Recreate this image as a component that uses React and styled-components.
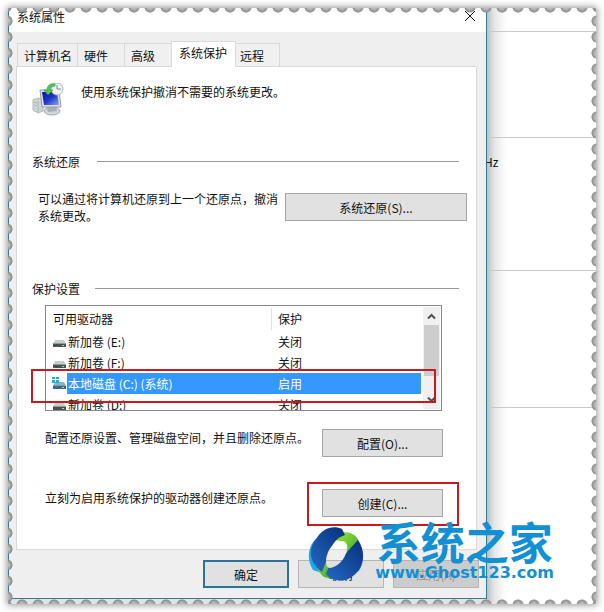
import React from "react";
import styled, { createGlobalStyle } from "styled-components";

const GlobalStyle = createGlobalStyle`
  * { box-sizing: border-box; }
  body {
    margin: 0;
    background: #fff;
    color: #111;
    font: 12px/17px "Noto Sans CJK SC", sans-serif;
  }
  button { font: inherit; color: inherit; padding: 0; }
  p, h1, h2 { margin: 0; font: inherit; }
`;

const Page = styled.div`
  padding: 8px;
`;

const Stamp = styled.div`
  position: relative;
  display: grid;
  grid-template-columns: minmax(0, 1fr) 109px;
  padding-bottom: 5px;
  box-shadow: 0 0 7px 1px rgba(0, 0, 0, 0.42);
  background: #e2e2e2;
`;

const Holes = styled.div`
  position: absolute;
  pointer-events: none;
  background-image: radial-gradient(circle, #bbb 0 2px, #a0a0a0 4px, #8d8d8d 5px, transparent 6px);
  ${({ $side }) =>
    $side === "top" || $side === "bottom"
      ? `left: 0; right: 0; ${$side}: 0; height: 5px; background-size: 16px 12px; background-position: 6px ${$side === "top" ? "-7px" : "0"};`
      : `top: 0; bottom: 0; ${$side}: 0; width: 5px; background-size: 12px 16px; background-position: ${$side === "left" ? "-7px" : "0"} 5px;`}
`;

const Dialog = styled.section`
  background: #efefef;
  border: solid #317d98;
  border-width: 0 1px 1px;
  padding-bottom: 10px;
`;

const TitleBar = styled.header`
  display: flex;
  justify-content: space-between;
  height: 24px;
  padding: 0 10px 0 8px;
  background: #fff;
`;

const CloseButton = styled.button`
  width: 12px;
  height: 16px;
  border: 0;
  background: none;
  display: flex;
  align-items: center;
`;

const Tabs = styled.div`
  display: flex;
  align-items: flex-end;
  height: 34px;
  padding-left: 8px;
`;

const Tab = styled.button`
  width: ${({ $width }) => $width}px;
  height: ${({ $active }) => ($active ? 26 : 23)}px;
  margin-bottom: ${({ $active }) => ($active ? -1 : 0)}px;
  position: relative;
  padding-left: ${({ $active }) => ($active ? 7 : 6)}px;
  padding-bottom: ${({ $active }) => ($active ? 4 : 0)}px;
  text-align: left;
  border: 1px solid #d9d9d9;
  border-right-width: ${({ $active }) => ($active ? 1 : 0)}px;
  border-bottom: 0;
  background: ${({ $active }) => ($active ? "#fff" : "#f0f0f0")};
  &:last-child { padding-left: 4px; border-left-width: 0; border-right-width: 1px; }
`;

const Panel = styled.div`
  margin: 0 9px 0 7px;
  padding: 16px 17px 0 15px;
  border: 1px solid #d9d9d9;
  background: #fff;
`;

const Intro = styled.div`
  display: flex;
  gap: 17px;
  height: 70px;
`;

const GroupTitle = styled.h2`
  display: flex;
  align-items: center;
  gap: ${({ $gap }) => $gap}px;
  &::after {
    content: "";
    flex: 1;
    height: 1px;
    background: #999;
  }
`;

const RestoreRow = styled.div`
  display: flex;
  align-items: center;
  justify-content: space-between;
  margin: 20px -8px 56px 6px;
  p { width: 242px; }
`;

const ActionButton = styled.button`
  width: ${({ $wide }) => ($wide ? 182 : 121)}px;
  height: 28px;
  flex-shrink: 0;
  border: 1px solid #a5a5a5;
  background: #e1e1e1;
`;

const DriveList = styled.div`
  position: relative;
  margin: 8px 17px 18px 13px;
`;

const DriveView = styled.div`
  display: flex;
  height: 106px;
  border: 1px solid #828790;
  overflow: hidden;
`;

const DriveTable = styled.table`
  flex: 1;
  table-layout: fixed;
  border-collapse: collapse;
  text-align: left;
  th { height: 25px; padding: 0 0 0 7px; font-weight: normal; }
  th + th { background: linear-gradient(#e2e2e2, #e2e2e2) 0 2px / 1px 22px no-repeat; }
  td { height: 21px; padding: 0; line-height: 21px; }
  td:first-child { padding-left: 6px; }
  td:nth-child(2) { padding-left: 1px; }
  td:last-child { padding-left: 7px; }
  svg { display: block; }
`;

const DriveRow = styled.tr`
  td + td {
    background: ${({ $selected }) => ($selected ? "#3399ff" : "transparent")};
    color: ${({ $selected }) => ($selected ? "#fff" : "inherit")};
  }
`;

const ScrollBar = styled.div`
  width: 17px;
  margin: 1px 1px 1px 2px;
  background: #f0f0f0;
  display: flex;
  flex-direction: column;
  align-items: center;
  padding: 6px 0;
`;

const Thumb = styled.div`
  width: 15px;
  height: 51px;
  margin: 5px 0 auto;
  background: #cdcdcd;
`;

const Highlight = styled.div`
  position: absolute;
  inset: ${({ $inset }) => $inset};
  border: 2px solid #c41c1e;
  pointer-events: none;
`;

const SettingRow = styled.div`
  display: flex;
  justify-content: space-between;
  margin: 0 16px 32px 13px;
`;

const ButtonAnchor = styled.div`
  position: relative;
  display: flex;
`;

const Footer = styled.footer`
  display: flex;
  justify-content: flex-end;
  gap: 9px;
  padding: 10px 7px 0;
`;

const FooterButton = styled.button`
  width: 86px;
  height: 28px;
  border: ${({ $primary }) => ($primary ? "2px solid #2c7398" : "1px solid #b5b5b5")};
  background: ${({ disabled }) => (disabled ? "#cccccc" : "#e1e1e1")};
  color: ${({ disabled }) => (disabled ? "#929292" : "#111")};
`;

const Backdrop = styled.aside`
  overflow: hidden;
  margin-bottom: -5px;
  background: linear-gradient(90deg, #bac1c3, #e3e5e6 7px, #fff 19px);
`;

const BackdropSection = styled.div`
  height: ${({ $height }) => $height}px;
  padding-top: 15px;
  border-bottom: 1px solid #c9c9c9;
  text-indent: -3px;
`;

const Watermark = styled.div`
  position: absolute;
  right: 42px;
  bottom: 21px;
  display: flex;
  align-items: flex-end;
  gap: 11px;
  color: #1290d2;
  pointer-events: none;
`;

const WatermarkText = styled.div`
  display: flex;
  flex-direction: column;
  align-items: center;
  strong { font: 700 44px/44px "Noto Sans CJK SC", sans-serif; }
  span { font: bold 16px/20px "DejaVu Sans", sans-serif; }
`;

const tabs = [
  ["计算机名", 60],
  ["硬件", 47],
  ["高级", 47],
  ["系统保护", 65],
  ["远程", 44],
];

const drives = [
  ["新加卷 (E:)", "关闭"],
  ["新加卷 (F:)", "关闭"],
  ["本地磁盘 (C:) (系统)", "启用"],
  ["新加卷 (D:)", "关闭"],
];

function DriveIcon({ system }) {
  return (
    <svg width="15" height="15" viewBox="0 0 15 15" aria-hidden="true">
      <path d="M3 6h9l2 4H1z" fill={system ? "#8bafc8" : "#c7cbcb"} />
      <path d="M1 9h13v4H1z" fill={system ? "#346c96" : "#4b5152"} />
      <path d="M1 9h13v1H1z" fill="#939a9c" />
      <path d="M10 11h2v1h-2z" fill="#8fe39a" />
      {system && <path d="M0 1h3v2H0zm4 0h3v2H4zM0 4h3v3H0zm4 0h3v3H4z" fill="#25a7cf" />}
    </svg>
  );
}

function Chevron({ down }) {
  return (
    <svg width="9" height="7" viewBox="0 0 9 7" aria-hidden="true">
      <path d={down ? "M1 1.5l3.5 3.5L8 1.5" : "M1 5.5L4.5 2 8 5.5"} fill="none" stroke="#505050" strokeWidth="2" />
    </svg>
  );
}

function ComputerIcon() {
  return (
    <svg width="32" height="33" viewBox="0 0 32 33" aria-hidden="true">
      <defs>
        <linearGradient id="screen" x1="0" y1="0" x2="1" y2="1">
          <stop stopColor="#0714a2" /><stop offset=".5" stopColor="#2036c8" /><stop offset="1" stopColor="#8ba8ef" />
        </linearGradient>
      </defs>
      <path d="M1 17l5-2 5 1v12l-5 2-5-3z" fill="#d1d4d6" stroke="#b2b7ba" />
      <path d="M6 17v12M2 19l3 1M2 22l3 1" stroke="#b0b6ba" />
      <ellipse cx="20" cy="28" rx="8" ry="4" fill="#d3d6d8" stroke="#a4aaae" />
      <path d="M15 25l9-1 1 4-9 1z" fill="#a7aeb4" />
      <path d="M8 7h19l2 17H10z" fill="#dbe1e5" stroke="#949da6" />
      <path d="M10 9h15l2 13H12z" fill="url(#screen)" />
      <circle cx="25" cy="6" r="6" fill="#eef2f5" stroke="#aab5bd" />
      <path d="M25 2v4h4" fill="none" stroke="#7e8c96" />
      <path d="M23 1c-5-1-8 2-8 6h-3l4 5 5-5h-3c0-2 2-4 5-4z" fill="#55c650" stroke="#269535" strokeWidth=".6" />
    </svg>
  );
}

function RingLogo() {
  return (
    <svg width="56" height="56" viewBox="0 0 56 56" aria-hidden="true">
      <defs>
        <linearGradient id="blue" x1="0" y1="1" x2="1" y2="0">
          <stop stopColor="#2369c4" /><stop offset="1" stopColor="#092f7b" />
        </linearGradient>
        <linearGradient id="green" x1="0" y1="0" x2="1" y2="1">
          <stop stopColor="#a2e72e" /><stop offset="1" stopColor="#239a3d" />
        </linearGradient>
        <mask id="ring">
          <path d="M0 0h56v56H0z" fill="#fff" />
          <path d="M34 14C26 14 19 23 18 33c0 5 1 8 4 8 8-1 15-9 17-18 1-5-1-9-5-9z" fill="#000" />
        </mask>
      </defs>
      <g mask="url(#ring)">
        <path d="M8 12C-1 20-1 34 5 43l9 3 3-8-6-20z" fill="#11aee8" />
        <path d="M47 12c9 8 10 22 4 32l-10 2-2-14z" fill="#11aee8" />
        <path d="M10 30c-3 8 0 15 6 20l12 3 2-14-11-3 1-14z" fill="url(#green)" />
        <path d="M30 7c12-5 22 2 22 14l-4 16-12 2 3-12-3-12-9-2z" fill="url(#green)" />
        <path d="M8 12C15 0 26-2 34 2l3 6C27 11 22 20 19 32l-5 13C2 37-1 23 8 12z" fill="url(#blue)" />
        <path d="M50 13c9 13 6 30-8 38-8 5-19 2-24-4l3-8c11-3 18-15 29-26z" fill="url(#blue)" />
      </g>
    </svg>
  );
}

export default function App() {
  return (
    <>
      <GlobalStyle />
      <Page>
        <Stamp>
          <Dialog aria-label="系统属性">
            <TitleBar>
              <h1>系统属性</h1>
              <CloseButton aria-label="关闭">
                <svg width="12" height="12" viewBox="0 0 12 12"><path d="M1 1l10 10M11 1L1 11" stroke="#111" /></svg>
              </CloseButton>
            </TitleBar>
            <Tabs role="tablist">
              {tabs.map(([name, width]) => (
                <Tab key={name} role="tab" aria-selected={name === "系统保护"} $active={name === "系统保护"} $width={width}>{name}</Tab>
              ))}
            </Tabs>
            <Panel role="tabpanel">
              <Intro><ComputerIcon /><p>使用系统保护撤消不需要的系统更改。</p></Intro>
              <GroupTitle $gap={17}>系统还原</GroupTitle>
              <RestoreRow>
                <p>可以通过将计算机还原到上一个还原点，撤消系统更改。</p>
                <ActionButton $wide>系统还原(S)...</ActionButton>
              </RestoreRow>
              <GroupTitle $gap={15}>保护设置</GroupTitle>
              <DriveList>
                <DriveView>
                  <DriveTable>
                    <colgroup><col width="21" /><col width="204" /><col /></colgroup>
                    <thead><tr><th colSpan="2">可用驱动器</th><th>保护</th></tr></thead>
                    <tbody>
                      {drives.map(([name, state]) => (
                        <DriveRow key={name} $selected={state === "启用"}>
                          <td><DriveIcon system={state === "启用"} /></td>
                          <td>{name}</td>
                          <td>{state}</td>
                        </DriveRow>
                      ))}
                    </tbody>
                  </DriveTable>
                  <ScrollBar><Chevron /><Thumb /><Chevron down /></ScrollBar>
                </DriveView>
                <Highlight $inset="64px 6px 8px -14px" />
              </DriveList>
              <SettingRow>
                <p>配置还原设置、管理磁盘空间，并且删除还原点。</p>
                <ActionButton>配置(O)...</ActionButton>
              </SettingRow>
              <SettingRow>
                <p>立刻为启用系统保护的驱动器创建还原点。</p>
                <ButtonAnchor>
                  <ActionButton>创建(C)...</ActionButton>
                  <Highlight $inset="-7px -16px -9px -15px" />
                </ButtonAnchor>
              </SettingRow>
            </Panel>
            <Footer>
              <FooterButton $primary>确定</FooterButton>
              <FooterButton>取消</FooterButton>
              <FooterButton disabled>应用(A)</FooterButton>
            </Footer>
          </Dialog>
          <Backdrop>
            <BackdropSection $height={24} />
            <BackdropSection $height={106} />
            <BackdropSection $height={133}>Hz</BackdropSection>
            <BackdropSection $height={137} />
          </Backdrop>
          <Watermark>
            <RingLogo />
            <WatermarkText><strong>系统之家</strong><span>www.Ghost123.com</span></WatermarkText>
          </Watermark>
          <Holes $side="top" />
          <Holes $side="bottom" />
          <Holes $side="left" />
          <Holes $side="right" />
        </Stamp>
      </Page>
    </>
  );
}
